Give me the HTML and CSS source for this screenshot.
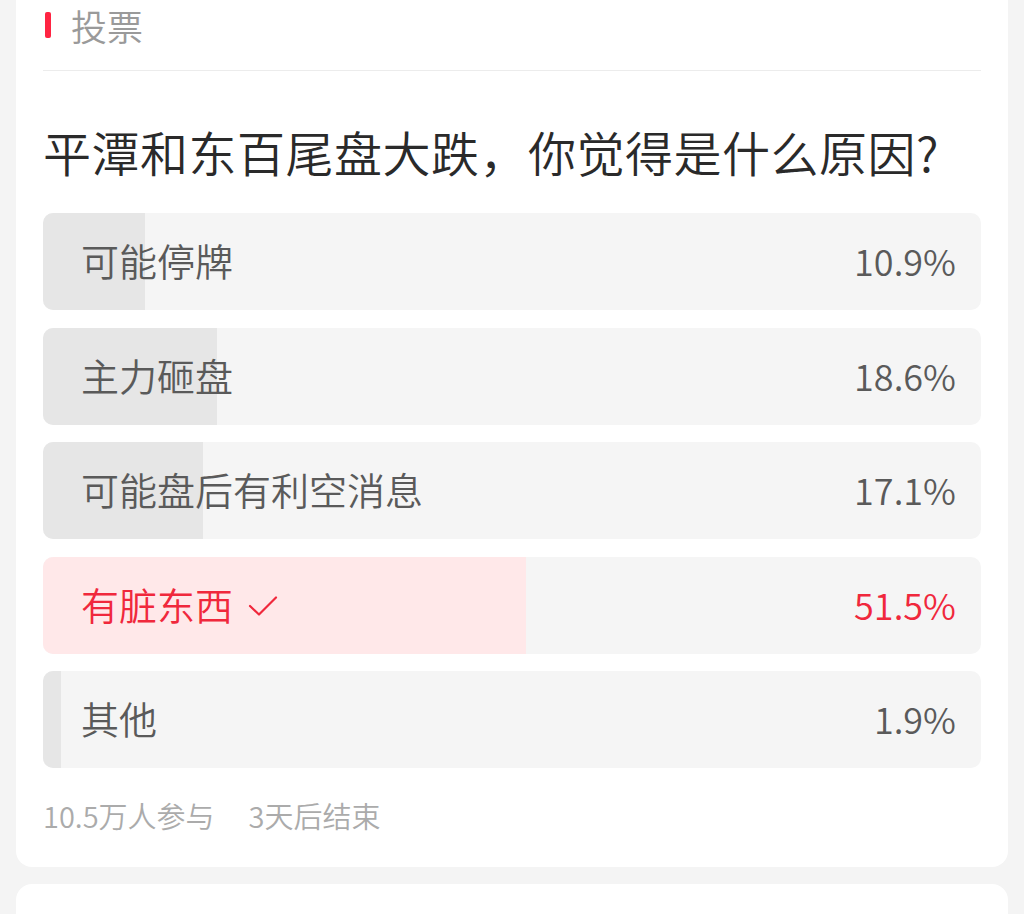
FILE: index.html
```html
<!DOCTYPE html>
<html lang="zh-CN">
<head>
<meta charset="utf-8">
<title>投票</title>
<link rel="stylesheet" href="styles.css">
</head>
<body>
<div class="page">
  <section class="card">
    <div class="vote-head">
      <span class="vote-mark"></span>
      <span class="vote-label">投票</span>
    </div>
    <h1 class="vote-title">平潭和东百尾盘大跌，你觉得是什么原因?</h1>
    <ul class="options">
      <li class="option">
        <span class="fill" style="width:10.9%"></span>
        <span class="opt-text">可能停牌</span>
        <span class="opt-pct">10.9%</span>
      </li>
      <li class="option">
        <span class="fill" style="width:18.6%"></span>
        <span class="opt-text">主力砸盘</span>
        <span class="opt-pct">18.6%</span>
      </li>
      <li class="option">
        <span class="fill" style="width:17.1%"></span>
        <span class="opt-text">可能盘后有利空消息</span>
        <span class="opt-pct">17.1%</span>
      </li>
      <li class="option selected">
        <span class="fill" style="width:51.5%"></span>
        <span class="opt-text">有脏东西<svg class="check" width="30" height="22" viewBox="0 0 30 22"><polyline points="2,11 11,19.5 28,2.5" fill="none" stroke="#f0283c" stroke-width="2.2" stroke-linecap="round" stroke-linejoin="round"/></svg></span>
        <span class="opt-pct">51.5%</span>
      </li>
      <li class="option">
        <span class="fill" style="width:1.9%"></span>
        <span class="opt-text">其他</span>
        <span class="opt-pct">1.9%</span>
      </li>
    </ul>
    <div class="vote-foot">
      <span>10.5万人参与</span>
      <span>3天后结束</span>
    </div>
  </section>
  <section class="card next"></section>
</div>
</body>
</html>
```

FILE: styles.css
```css
html, body {
  margin: 0;
  padding: 0;
  background: #f4f4f4;
}
body {
  font-family: "Noto Sans CJK SC", "Noto Sans", sans-serif;
  font-weight: 350;
  overflow: hidden;
}
.page {
  display: flex;
  flex-direction: column;
  gap: 17px;
  padding: 0 16px;
}
.card {
  background: #fff;
  border-radius: 0 0 16px 16px;
  padding: 0 27px 32px;
}
.card.next {
  border-radius: 16px 16px 0 0;
  height: 120px;
  padding: 0;
}
.vote-head {
  display: flex;
  align-items: center;
  gap: 20px;
  height: 46px;
  padding: 2px 0 22px 2px;
  border-bottom: 1px solid #ececec;
}
.vote-mark {
  width: 6px;
  height: 26px;
  border-radius: 2px;
  background: #ff2442;
}
.vote-label {
  font-size: 36px;
  line-height: 44px;
  color: #9a9a9a;
}
.vote-title {
  margin: 46px 0 28px;
  font-size: 48px;
  line-height: 68px;
  font-weight: 350;
  color: #2a2a2a;
  letter-spacing: 0.5px;
}
.options {
  list-style: none;
  margin: 0;
  padding: 0;
  display: flex;
  flex-direction: column;
  gap: 17.6px;
}
.option {
  position: relative;
  height: 97px;
  border-radius: 10px;
  background: #f5f5f5;
  overflow: hidden;
  display: flex;
  align-items: center;
  justify-content: space-between;
  padding: 0 25px 0 40px;
  color: #5a5a5a;
}
.fill {
  position: absolute;
  left: 0;
  top: 0;
  bottom: 0;
  background: #e6e6e6;
}
.opt-text, .opt-pct {
  position: relative;
  display: flex;
  align-items: center;
  font-size: 38px;
  line-height: 50px;
  margin-top: -3px;
  margin-left: -2px;
}
.opt-pct {
  font-size: 36px;
  margin-left: 0;
}
.option.selected {
  color: #f0283c;
}
.option.selected .fill {
  background: #ffe8e9;
}
.check {
  margin-left: 15px;
  margin-top: 4px;
}
.vote-foot {
  margin-top: 27px;
  display: flex;
  gap: 34px;
  font-size: 29px;
  line-height: 40px;
  color: #ababab;
}
```
